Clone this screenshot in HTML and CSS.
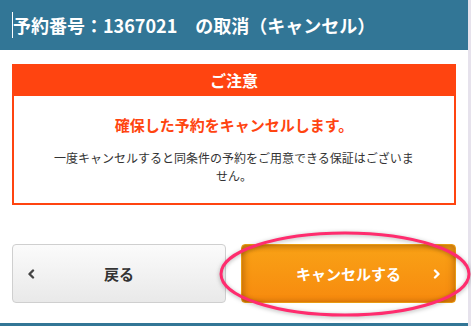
FILE: index.html
```html
<!DOCTYPE html>
<html lang="ja">
<head>
<meta charset="utf-8">
<title>予約の取消</title>
<link rel="stylesheet" href="styles.css">
</head>
<body>
<div class="page">
  <div class="main">
    <header class="header"><span class="caret"></span><h1 class="title">予約番号：1367021　の取消（キャンセル）</h1></header>
    <div class="content">
      <section class="notice">
        <div class="notice-title">ご注意</div>
        <div class="notice-body">
          <p class="notice-lead">確保した予約をキャンセルします。</p>
          <p class="notice-text">一度キャンセルすると同条件の予約をご用意できる保証はございま<br>せん。</p>
        </div>
      </section>
      <div class="actions">
        <button class="btn btn-back">
          <svg class="chev" width="8" height="10" viewBox="0 0 8 10"><polyline points="6,1.5 2.5,5 6,8.5" fill="none" stroke="#444" stroke-width="2.4" stroke-linecap="round" stroke-linejoin="round"/></svg>
          <span>戻る</span>
        </button>
        <button class="btn btn-cancel">
          <span>キャンセルする</span>
          <svg class="chev" width="8" height="10" viewBox="0 0 8 10"><polyline points="2,1.5 5.5,5 2,8.5" fill="none" stroke="#fff" stroke-width="2.4" stroke-linecap="round" stroke-linejoin="round"/></svg>
        </button>
      </div>
    </div>
    <div class="footer-bar"></div>
    <svg class="highlight" width="254" height="90" viewBox="0 0 254 90"><ellipse cx="127" cy="44" rx="124" ry="41" fill="none" stroke="#ff2c6e" stroke-width="3"/></svg>
  </div>
  <div class="scrollbar"></div>
</div>
</body>
</html>
```
FILE: styles.css
```css
* { box-sizing: border-box; }
html, body { margin: 0; padding: 0; }
body {
  font-family: "Noto Sans CJK JP", "Noto Sans", sans-serif;
  background: #fff;
  width: 471px;
  height: 326px;
  overflow: hidden;
}
.page { display: flex; height: 326px; }
.main { position: relative; width: 468px; display: flex; flex-direction: column; }
.scrollbar { width: 3px; background: #e6e2ec; }
.header {
  height: 50px;
  background: #327696;
  display: flex;
  align-items: center;
  padding-left: 12px;
}
.caret { width: 1px; height: 26px; background: #fff; margin-right: 0; }
.title {
  margin: 0;
  color: #fff;
  font-size: 18px;
  font-weight: 700;
  line-height: 26px;
  letter-spacing: 0;
  white-space: nowrap;
}
.content { padding: 14px 12px 0; flex: 1; }
.notice { border: 2px solid #ff4410; border-top: 0; }
.notice-title {
  background: #ff4410;
  color: #fff;
  font-weight: 700;
  font-size: 16px;
  height: 32px;
  line-height: 32px;
  text-align: center;
}
.notice-body { padding: 18px 10px 18px; text-align: center; }
.notice-lead {
  margin: 0;
  color: #ff4410;
  font-weight: 700;
  font-size: 15px;
  line-height: 22px;
}
.notice-text {
  margin: 13px 0 0;
  color: #333;
  font-size: 12px;
  line-height: 18px;
}
.actions {
  display: grid;
  grid-template-columns: 214px 215px;
  column-gap: 15px;
  margin-top: 39px;
}
.btn {
  height: 59px;
  border-radius: 4px;
  font-family: inherit;
  font-size: 15px;
  font-weight: 700;
  display: flex;
  align-items: center;
  position: relative;
  padding: 0 14px;
  cursor: pointer;
}
.btn span { flex: 1; text-align: center; }
.btn-back {
  background: linear-gradient(#fbfbfb, #e9e9e9);
  border: 1px solid #cfcfcf;
  color: #333;
}
.btn-back span { margin-right: 8px; }
.btn-cancel {
  background: linear-gradient(#f9a216, #f78a0e);
  border: 1px solid #e89a12;
  box-shadow: inset 3px 0 6px rgba(150, 80, 0, 0.35), inset -3px 0 6px rgba(150, 80, 0, 0.25), inset 0 3px 5px rgba(150, 80, 0, 0.2);
  color: #fff;
}
.btn-cancel span { margin-left: 8px; }
.footer-bar { height: 3px; background: #327696; }
.highlight {
  position: absolute;
  left: 218px;
  top: 230px;
  filter: drop-shadow(0 1px 2px rgba(0,0,0,0.3));
  pointer-events: none;
}
```
